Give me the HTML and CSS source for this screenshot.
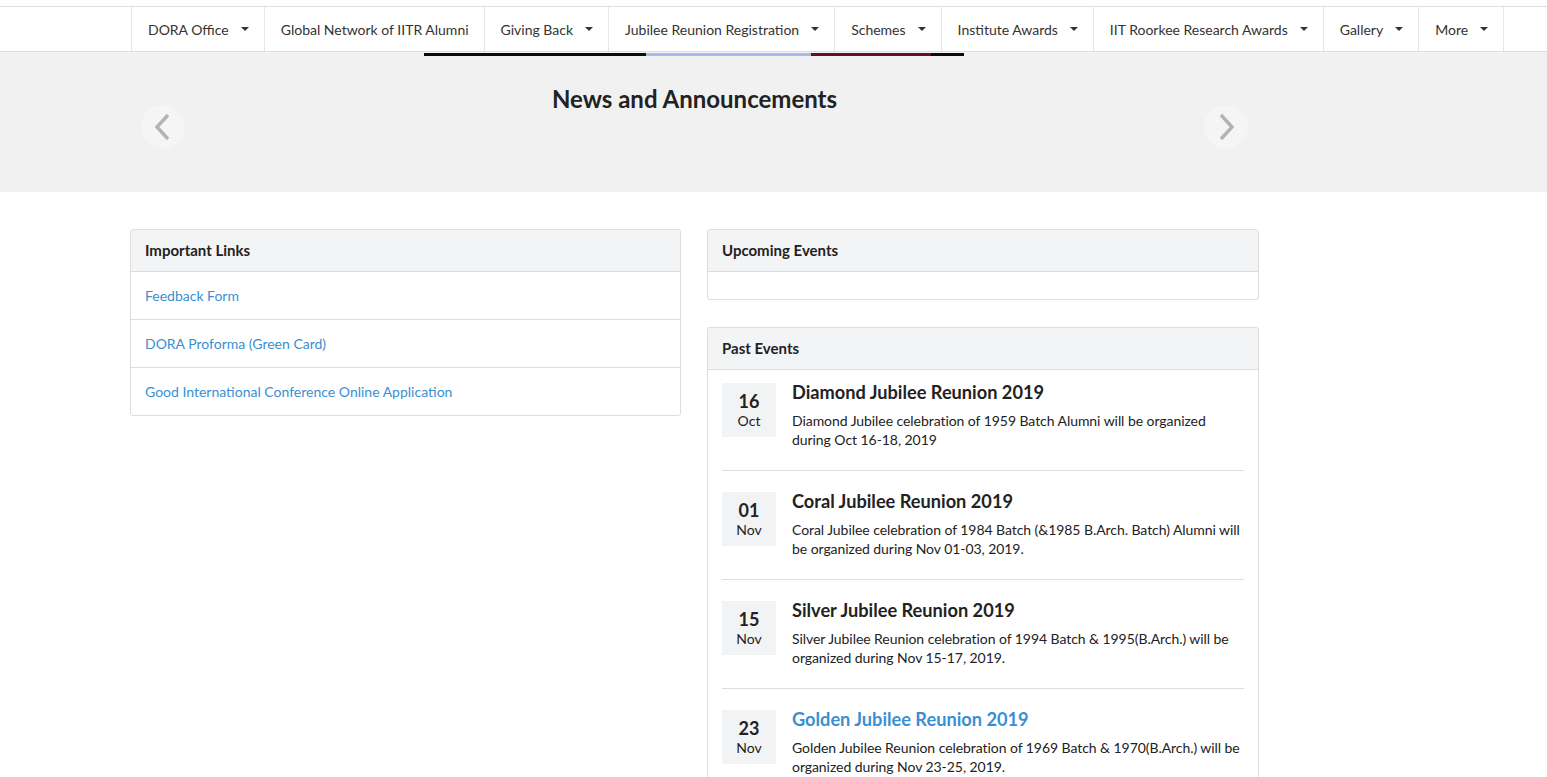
FILE: index.html
```html
<!DOCTYPE html>
<html>
<head>
<meta charset="utf-8">
<link rel="stylesheet" href="styles.css">
</head>
<body>
<nav class="nav">
  <ul class="menu">
    <li class="item">DORA Office<span class="caret"></span></li>
    <li class="item">Global Network of IITR Alumni</li>
    <li class="item">Giving Back<span class="caret"></span></li>
    <li class="item">Jubilee Reunion Registration<span class="caret"></span></li>
    <li class="item">Schemes<span class="caret"></span></li>
    <li class="item">Institute Awards<span class="caret"></span></li>
    <li class="item">IIT Roorkee Research Awards<span class="caret"></span></li>
    <li class="item">Gallery<span class="caret"></span></li>
    <li class="item">More<span class="caret"></span></li>
  </ul>
</nav>
<section class="hero">
  <div class="strip"><span class="s1"></span><span class="s2"></span><span class="s3"></span><span class="s4"></span></div>
  <div class="hero-inner">
    <button class="arrow"><svg width="20" height="30" viewBox="0 0 20 30"><path d="M15 3 L4 15 L15 27" fill="none" stroke="#b3b3b3" stroke-width="3.4"/></svg></button>
    <h2 class="hero-title">News and Announcements</h2>
    <button class="arrow"><svg width="20" height="30" viewBox="0 0 20 30"><path d="M5 3 L16 15 L5 27" fill="none" stroke="#b3b3b3" stroke-width="3.4"/></svg></button>
  </div>
</section>
<main class="main">
  <div class="col">
    <div class="card">
      <div class="card-head">Important Links</div>
      <a class="link-row" href="#">Feedback Form</a>
      <a class="link-row" href="#">DORA Proforma (Green Card)</a>
      <a class="link-row" href="#">Good International Conference Online Application</a>
    </div>
  </div>
  <div class="col">
    <div class="card">
      <div class="card-head">Upcoming Events</div>
      <div class="card-empty"></div>
    </div>
    <div class="card past">
      <div class="card-head">Past Events</div>
      <div class="events">
        <div class="event">
          <div class="date"><div class="day">16</div><div class="mon">Oct</div></div>
          <div class="info">
            <h3 class="ev-title">Diamond Jubilee Reunion 2019</h3>
            <p class="ev-desc">Diamond Jubilee celebration of 1959 Batch Alumni will be organized during Oct 16-18, 2019</p>
          </div>
        </div>
        <div class="event">
          <div class="date"><div class="day">01</div><div class="mon">Nov</div></div>
          <div class="info">
            <h3 class="ev-title">Coral Jubilee Reunion 2019</h3>
            <p class="ev-desc">Coral Jubilee celebration of 1984 Batch (&amp;1985 B.Arch. Batch) Alumni will be organized during Nov 01-03, 2019.</p>
          </div>
        </div>
        <div class="event">
          <div class="date"><div class="day">15</div><div class="mon">Nov</div></div>
          <div class="info">
            <h3 class="ev-title">Silver Jubilee Reunion 2019</h3>
            <p class="ev-desc">Silver Jubilee Reunion celebration of 1994 Batch &amp; 1995(B.Arch.) will be organized during Nov 15-17, 2019.</p>
          </div>
        </div>
        <div class="event">
          <div class="date"><div class="day">23</div><div class="mon">Nov</div></div>
          <div class="info">
            <h3 class="ev-title link">Golden Jubilee Reunion 2019</h3>
            <p class="ev-desc">Golden Jubilee Reunion celebration of 1969 Batch &amp; 1970(B.Arch.) will be organized during Nov 23-25, 2019.</p>
          </div>
        </div>
      </div>
    </div>
  </div>
</main>
</body>
</html>
```
FILE: styles.css
```css
* { box-sizing: border-box; }
body {
  margin: 0;
  font-family: Lato, "Open Sans", sans-serif;
  color: #222;
  background: #fff;
}
.nav {
  margin-top: 6px;
  border-top: 1px solid #dddddd;
  border-bottom: 1px solid #dcdcdc;
  background: #fff;
  box-shadow: 0 1px 1px rgba(0,0,0,0.04);
}
.menu {
  list-style: none;
  margin: 0;
  padding: 0 0 0 131px;
  display: flex;
  height: 44px;
}
.item {
  display: flex;
  align-items: center;
  padding: 0 15px 0 16px;
  border-left: 1px solid #e6e6e6;
  font-size: 14px;
  color: #333;
  white-space: nowrap;
}
.item:last-child { border-right: 1px solid #e6e6e6; }
.caret {
  display: inline-block;
  margin-left: 12px;
  width: 0;
  height: 0;
  border-left: 4px solid transparent;
  border-right: 4px solid transparent;
  border-top: 4px solid #333;
}
.hero {
  background: #f1f1f1;
  height: 139px;
}
.strip {
  display: flex;
  margin-left: 424px;
  width: 540px;
  height: 3px;
  margin-top: 1px;
}
.strip span { display: block; height: 100%; }
.s1 { width: 222px; background: #0c0c10; }
.s2 { width: 165px; background: #aab8ec; }
.s3 { width: 120px; background: #6a0d25; }
.s4 { width: 33px; background: #0c0c10; }
.hero-inner {
  width: 1129px;
  margin-left: 130px;
  padding: 0 11px;
  display: flex;
  align-items: flex-start;
  justify-content: space-between;
}
.hero-title {
  margin: 28px 0 0;
  font-size: 24px;
  line-height: 30px;
  font-weight: 700;
  color: #222;
}
.arrow {
  margin-top: 49px;
  width: 44px;
  height: 44px;
  border-radius: 50%;
  border: 0;
  padding: 0;
  background: #f5f5f5;
  display: flex;
  align-items: center;
  justify-content: center;
}
.main {
  margin: 37px 0 0 130px;
  width: 1129px;
  display: grid;
  grid-template-columns: 551px 552px;
  column-gap: 26px;
}
.card {
  border: 1px solid #dddddd;
  border-radius: 3px;
  background: #fff;
  overflow: hidden;
}
.card.past { margin-top: 27px; }
.card-head {
  background: #f3f4f5;
  border-bottom: 1px solid #dddddd;
  height: 42px;
  line-height: 41px;
  padding: 0 14px;
  font-size: 15px;
  font-weight: 700;
  color: #222;
}
.link-row {
  display: block;
  height: 48px;
  line-height: 47px;
  padding: 0 14px;
  border-top: 1px solid #dddddd;
  color: #3a8fd3;
  text-decoration: none;
  font-size: 14px;
}
.card-head + .link-row { border-top: 0; height: 47px; line-height: 47px; }
.card-empty { height: 27px; }
.events { padding: 0 14px; }
.event {
  display: flex;
  gap: 16px;
  padding: 21px 0;
  border-bottom: 1px solid #dddddd;
}
.event:first-child { padding-top: 13px; }
.event:last-child { border-bottom: 0; }
.date {
  flex: 0 0 54px;
  height: 54px;
  background: #f2f3f5;
  text-align: center;
  padding-top: 7px;
}
.day { font-size: 18px; line-height: 22px; font-weight: 700; color: #222; }
.mon { font-size: 14px; line-height: 18px; color: #222; }
.info { flex: 1; }
.ev-title {
  margin: -2px 0 0;
  font-size: 18.2px;
  line-height: 22px;
  font-weight: 700;
  color: #222;
}
.ev-title.link { color: #3a8fd3; }
.ev-desc {
  margin: 8px 0 0;
  font-size: 14px;
  line-height: 19px;
  letter-spacing: -0.06px;
  color: #222;
}
```
